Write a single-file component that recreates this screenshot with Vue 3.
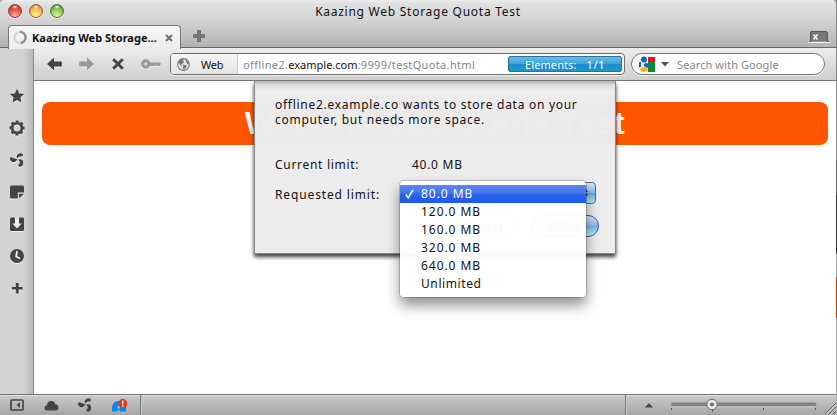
<script setup>
const sizes = ['80.0 MB', '120.0 MB', '160.0 MB', '320.0 MB', '640.0 MB', 'Unlimited']
const selected = '80.0 MB'
</script>

<template>
  <div class="desktop">
    <div class="window">
      <header class="titlebar">
        <div class="lights"><i class="red"></i><i class="yellow"></i><i class="green"></i></div>
        <div class="title">Kaazing Web Storage Quota Test</div>
        <div class="tabs">
          <div class="tab">
            <svg width="14" height="15" viewBox="0 0 14 15" fill="none" stroke-width="2.4">
              <circle cx="7" cy="7.5" r="5.6" stroke="#d3d8dc" />
              <path d="M7 1.9a5.6 5.6 0 0 1 1 11.1" stroke="#87929a" />
            </svg>
            <b>Kaazing Web Storage...</b>
            <svg class="close" width="8" height="8" viewBox="0 0 8 8" stroke="#6f6f6f" stroke-width="2"><path d="M1 1l6 6M7 1l-6 6" /></svg>
          </div>
          <svg class="newtab" width="12" height="12" viewBox="0 0 12 12"><path d="M4.5 .5h3v4h4v3h-4v4h-3v-4h-4v-3h4z" fill="#777" stroke="#555" stroke-width=".6" /></svg>
          <svg class="trash" width="22" height="12" viewBox="0 0 22 12">
            <path d="M1 10.500h1.500V2q0-1.500 1.500-1.500h14q1.500 0 1.500 1.500v8.500H21" fill="#777" stroke="#555" />
            <path d="M0 11.500h22" stroke="#eee" />
            <path d="M5.500 3.500l4 5M9.500 3.500l-4 5" stroke="#fff" stroke-width="1.400" />
          </svg>
        </div>
      </header>

      <div class="body">
        <nav class="sidebar">
          <svg viewBox="0 0 16 16"><path d="M8 .8l2.100 4.700 5 .6-3.700 3.500 1 5L8 12.100l-4.400 2.500 1-5L.9 6.100l5-.6z" /></svg>
          <svg viewBox="0 0 16 16"><circle cx="8" cy="8" r="4.900" fill="none" stroke="#444" stroke-width="2.800" /><circle cx="8" cy="8" r="6.700" fill="none" stroke="#444" stroke-width="1.800" stroke-dasharray="3 2.262" stroke-dashoffset="1.500" /></svg>
          <svg viewBox="0 0 16 16"><use href="#fan" /></svg>
          <svg viewBox="0 0 16 16"><path d="M2.500 1.500h11q1.500 0 1.500 1.500v5.500H8.800v6H2.500Q1 14.500 1 13V3q0-1.500 1.500-1.500z" /><path d="M10 9.700h5l-5 4.800z" /></svg>
          <svg viewBox="0 0 16 16"><path d="M2 1.500h12q1 0 1 1V14q0 1-1 1H2q-1 0-1-1V2.500q0-1 1-1z" /><path d="M6 1h4v6.500h2.700L8 12.500 3.300 7.500H6z" fill="#ededed" /><path d="M7 0h2v3H7z" fill="#d3d3d3" /></svg>
          <svg viewBox="0 0 16 16"><circle cx="8" cy="8" r="7" /><path d="M8 3.200l-.8 5.300 3.800 2" stroke="#eee" stroke-width="1.800" fill="none" /></svg>
          <svg viewBox="0 0 16 16"><path d="M6.800 3h2.900v3.900h3.900v2.700H9.700v3.900H6.800V9.600H2.900V6.900h3.900z" /></svg>
        </nav>

        <div class="main">
          <div class="toolbar">
            <svg class="ico back" width="15" height="14" viewBox="0 0 15 14"><path d="M0 7l7-6.500v4h7q.8 0 .8.800v3.400q0 .8-.8.800H7v4z" fill="#444" /></svg>
            <svg class="ico fwd" width="15" height="14" viewBox="0 0 15 14"><path d="M15 7L8 .5v4H1q-.8 0-.8.800v3.400q0 .8.8.800h7v4z" fill="#999" /></svg>
            <svg class="ico stop" width="12" height="12" viewBox="0 0 12 12" stroke="#444" stroke-width="3"><path d="M1.200 1.200l9.600 9.600M10.800 1.200l-9.600 9.600" /></svg>
            <svg class="ico key" width="20" height="10" viewBox="0 0 20 10"><circle cx="4.800" cy="5" r="3.100" fill="none" stroke="#999" stroke-width="3.200" /><path d="M8 3.500h11l1 1.500-1.500 2h-1.500l-1-1-1 1.500-1.200-1.500-1 1H8z" fill="#999" /></svg>
            <div class="address">
              <div class="badge">
                <svg width="13" height="13" viewBox="0 0 13 13"><circle cx="6.500" cy="6.500" r="5.900" fill="#e2e2e2" stroke="#777" stroke-width="1.100" /><path d="M1.200 4.200L4 1.200l2.800.2-.8 1.800 1.200.6-1.800 2-1.200.2.800 1.200-1 .8zM6.200 6.400l3.500 1-.8 2.500-2.400 2.200-.5-2.700zM8.500 1.200l3.200 3-.2 2.500-2-1.700z" fill="#777" /></svg>
                <span>Web</span>
              </div>
              <div class="url"><span>offline2.</span><span class="host">example.com</span><span>:9999/testQuota.html</span></div>
              <div class="progress"><span>Elements:</span><span>1/1</span></div>
            </div>
            <div class="search">
              <svg width="17" height="17" viewBox="0 0 17 17">
                <path d="M8 1h8v6H8z" fill="#f00b16" /><path d="M9 6h7v10H9z" fill="#078b35" /><path d="M0 6h5v5H0z" fill="#1263bd" /><path d="M2 0h7v16H2z" fill="#fff" />
                <ellipse cx="5" cy="3.500" rx="3" ry="3.100" fill="#1263bd" /><ellipse cx="7.200" cy="8.500" rx="2.600" ry="1.600" fill="#1263bd" /><path d="M6 8l4 2.500-2 1.500-3-2z" fill="#1263bd" /><ellipse cx="5" cy="13.500" rx="3.800" ry="2.500" fill="#fbb017" />
              </svg>
              <svg class="caret" width="8" height="5" viewBox="0 0 8 5"><path d="M0 0h8L4 4.500z" fill="#555" /></svg>
              <span>Search with Google</span>
            </div>
          </div>

          <div class="page">
            <h1>Web Storage Quota Test</h1>
            <section class="dialog">
              <p>offline2.example.co wants to store data on your<br />computer, but needs more space.</p>
              <dl>
                <dt class="cur">Current limit:</dt><dd>40.0 MB</dd>
                <dt class="req">Requested limit:</dt>
                <dd class="select"><svg width="6" height="10" viewBox="0 0 6 10"><path d="M0 4l3-4 3 4zM0 6l3 4 3-4z" fill="#222" /></svg></dd>
              </dl>
              <div class="actions"><button>Reject</button><button class="allow">Allow</button></div>
              <ul class="menu">
                <li v-for="s in sizes" :key="s" :class="{ on: s === selected }">
                  <svg class="check" width="9" height="10" viewBox="0 0 9 10"><path v-if="s === selected" d="M.8 5.500l2.400 3.300L8 .8" fill="none" stroke="#fff" stroke-width="1.600" /></svg>
                  <span>{{ s }}</span>
                </li>
              </ul>
            </section>
          </div>
        </div>
      </div>

      <footer class="status">
        <div class="panel">
          <svg width="14" height="12" viewBox="0 0 14 12"><rect x="1" y="1" width="12" height="10" rx=".8" fill="none" stroke="#444" stroke-width="1.700" /><path d="M10 3v6L6.500 6z" fill="#444" /></svg>
          <svg width="15" height="11" viewBox="0 0 15 11"><path d="M3 10.500Q.5 10.500.5 8 .5 5.500 3 5.200 3.500 1 7.300 1q3.200 0 4 3.200 3.200.3 3.200 3.300 0 3-3 3z" fill="#444" /></svg>
          <svg width="16" height="16" viewBox="0 0 16 16" fill="#444">
            <defs><g id="fan"><path d="M.8 6.800Q1 5 2.800 5.200L5 6.300q1.500 1 3.500.7Q7.500 9.800 5 10.200 1.500 10.200.8 6.800z" /><path d="M8.400 6.400Q6.800 3.800 9 2.200q2.200-1.400 4.300-.5 1.300 1.200.2 2.500l-2.400.4Q9.200 4.800 8.400 6.400z" /><path d="M9 7.800q3-1.500 4.700.8 1.300 3-.4 5.200-1.300 1.300-3 .8-1.500-.8-.8-2.200l1.300-1.200Q11.300 9.300 9 7.800z" /></g></defs>
            <use href="#fan" />
          </svg>
          <svg width="17" height="13" viewBox="0 0 17 13"><path d="M1 12.500V8Q2 2 7 2h5q3 2 3 7v3.500H9L7.500 10.500 6 12.500z" fill="#0787ee" /><path d="M6.800 7h2v2.500h-2z" fill="#b3ccdf" /><circle cx="11.700" cy="4.600" r="4.500" fill="#f02f16" /><path d="M11.700 1.600v3.800M11.700 6.300v1.400" stroke="#fff" stroke-width="1.500" /></svg>
        </div>
        <div class="blank"></div>
        <div class="zoom">
          <svg class="up" width="8" height="5" viewBox="0 0 8 5"><path d="M0 4.500h8L4 0z" fill="#444" /></svg>
          <svg class="slider" width="146" height="17" viewBox="0 0 146 17">
            <rect x=".5" y="6" width="144.500" height="3" rx="1.500" fill="#898989" stroke="#747474" stroke-width=".7" />
            <path d="M1 9.800h143" stroke="#ddd" stroke-width=".7" />
            <path d="M.5 11v2M41.500 12v3M92.500 11v2M144.500 11v2" stroke="#555" />
            <circle cx="41" cy="7.500" r="5.200" fill="#eee" stroke="#666" /><circle cx="41" cy="7.500" r="1.900" fill="#666" />
          </svg>
          <svg class="grip" width="11" height="11" viewBox="0 0 11 11"><path d="M0 11L11 0M4 11l7-7M8 11l3-3" stroke="#666" /><path d="M1 11.500l10-10M5 11.500l6-6" stroke="#eee" stroke-width=".7" /></svg>
        </div>
      </footer>
    </div>
    <div class="behind"><i class="b1"></i><i class="b2"></i><i class="b3"></i><i class="b4"></i><i class="b5"></i></div>
  </div>
</template>

<style>
body { margin: 0; overflow: hidden; background: #999; }
</style>

<style scoped>
* { box-sizing: border-box; }
svg { display: block; flex: none; }
.desktop { width: 837px; height: 415px; display: flex; background: #aaa; font: 12px/15px "Noto Sans", "Open Sans", sans-serif; color: #111; }
.window { width: 836px; display: flex; flex-direction: column; background: #fff; border-radius: 5px 5px 0 0; overflow: hidden; }
.titlebar { height: 48px; flex: none; position: relative; background: linear-gradient(#ededed 0, #e0e0e0 4px, #d6d6d6 18px, #b4b4b4 46px); border-bottom: 1px solid #686868; }
.lights { display: flex; gap: 7px; padding: 4px 0 0 8px; height: 22px; }
.lights i { width: 14px; height: 14px; border-radius: 50%; border: 1px solid #844; box-shadow: 0 1px #eee; }
.red { background: radial-gradient(ellipse 3px 2px at 50% 16%, #fff, transparent), radial-gradient(circle at 50% 85%, #ffb29a, #f1533c 50%, #a91c18); }
.lights .yellow { border-color: #a2603c; background: radial-gradient(ellipse 3px 2px at 50% 16%, #fff, transparent), radial-gradient(circle at 50% 80%, #ffff8c, #f6b04d 55%, #c25030); }
.lights .green { border-color: #4a7a34; background: radial-gradient(ellipse 3px 2px at 50% 16%, #fff, transparent), radial-gradient(circle at 50% 85%, #e3f590, #86c552 55%, #387022); }
.title { position: absolute; left: 0; right: 0; top: 4px; text-align: center; font-size: 12px; letter-spacing: .74px; }
.tabs { display: flex; align-items: flex-start; padding: 3px 6px 0 8px; }
.tab { width: 173px; height: 24px; display: flex; align-items: center; padding: 0 7px 0 4px; border: 1px solid #777; border-bottom: 0; border-radius: 4px 4px 0 0; background: linear-gradient(#f6f6f6, #ececec); position: relative; }
.tab b { margin: -1px 0 0 5px; width: 126px; font-size: 11px; white-space: nowrap; letter-spacing: 0; }
.close { margin-left: 7px; }
.newtab { margin: 5px 0 0 12px; }
.trash { margin: 6px 0 0 auto; }
.body { flex: 1; display: flex; min-height: 0; }
.sidebar { width: 34px; padding: 40px 0 0 1px; display: flex; flex-direction: column; align-items: center; gap: 16px; background: linear-gradient(90deg, #d4d4d4 0, #d3d3d3 24px, #b7b7b7 33px); border-right: 1px solid #888; }
.sidebar svg { width: 16px; height: 16px; fill: #444; filter: drop-shadow(0 1px #eee); }
.main { flex: 1; display: flex; flex-direction: column; min-width: 0; }
.toolbar { height: 33px; flex: none; display: flex; align-items: center; background: linear-gradient(#ededed, #cecece); border-bottom: 1px solid #777; padding-left: 13px; }
.ico { filter: drop-shadow(0 1px #eee); }
.fwd { margin-left: 17px; } .stop { margin-left: 18px; } .key { margin-left: 17px; }
.address { width: 455px; height: 22px; margin-left: 9px; display: flex; border: 1px solid #6d6d6d; border-radius: 4px; background: #fff; box-shadow: 0 1px #eee; }
.badge { width: 67px; display: flex; align-items: center; padding-left: 6px; border-right: 1px solid #ccc; border-radius: 3px 0 0 3px; background: linear-gradient(#f5f5f5, #e5e5e5); font-size: 11px; }
.badge span { margin-left: 11px; letter-spacing: -.2px; }
.url { flex: 1; padding: 3px 0 0 5px; font-size: 11px; color: #858585; white-space: nowrap; letter-spacing: .35px; }
.host { color: #111; letter-spacing: 0; }
.progress { width: 114px; height: 16px; margin: 2px 2px 0 0; border: 1px solid #27749f; border-radius: 2px; background: linear-gradient(#6bbce4, #3ba3d8 48%, #1b8dcd 52%, #2194d2); color: #fff; font-size: 11px; line-height: 15px; display: flex; gap: 10px; padding-left: 16px; letter-spacing: .1px; }
.progress span + span { letter-spacing: .6px; }
.search { width: 194px; height: 22px; margin-left: 6px; display: flex; align-items: center; padding-left: 7px; border: 1px solid #777; border-radius: 11px; background: #fff; box-shadow: 0 1px #eee; font-size: 11px; color: #858585; letter-spacing: .1px; white-space: nowrap; }
.caret { margin: 0 8px 0 5px; }
.page { flex: 1; position: relative; padding: 21px 8px 0; background: #fff; }
h1 { margin: 0; height: 43px; border-radius: 8px; background: #ff5500; color: #f8f6f5; text-align: center; font: bold 32px/42px "Liberation Sans", sans-serif; letter-spacing: .53px; }
.dialog { position: absolute; left: 220px; top: 0; width: 362px; height: 173px; padding: 16px 0 0 20px; border: 1px solid #888; border-top: 0; background: linear-gradient(rgba(175,175,175,.987), rgba(220,220,220,.987) 4px, rgba(236,236,236,.987) 10px); box-shadow: 0 3px 4px rgba(0,0,0,.75); clip-path: inset(0 -12px -100px -12px); letter-spacing: .72px; }
p { margin: 0; white-space: nowrap; }
dl { margin: 30px 0 0; display: grid; grid-template-columns: 125px 196px; grid-template-rows: 15px 20px; row-gap: 11px; }
dt { white-space: nowrap; letter-spacing: .7px; } dd { margin: 0 0 0 12px; white-space: nowrap; }
.req { padding-top: 4px; letter-spacing: .87px; }
.select { margin: -1px 0 0; width: 196px; height: 22px; border: 1px solid #536a8f; border-radius: 4px; background: linear-gradient(#d4e6f8, #84b9e7 50%, #65a8df 52%, #c2eaff); display: flex; justify-content: flex-end; align-items: center; padding-right: 7px; }
.actions { display: flex; gap: 12px; margin: 12px 0 0 176px; }
button { width: 68px; height: 22px; padding: 0; border: 1px solid #999; border-radius: 11px; background: #fafafa; font: 12px "Noto Sans", sans-serif; letter-spacing: .6px; }
.allow { border-color: #465b9c; background: linear-gradient(#dbeafb, #91bdec 48%, #78b5e9 52%, #c7f4ff); }
.menu { position: absolute; left: 145px; top: 100px; width: 186px; height: 116px; margin: 0; padding: 4px 0 0; list-style: none; border-radius: 4px; background: rgba(255,255,255,.97); box-shadow: 0 0 0 1px rgba(0,0,0,.18), 0 8px 14px rgba(0,0,0,.45); }
.menu li { height: 18px; display: flex; align-items: center; padding-left: 5px; gap: 7px; line-height: 18px; letter-spacing: .95px; }
.menu li:last-child { letter-spacing: .6px; }
.menu .on { color: #fff; background: linear-gradient(#5d88f3, #3f71ee 50%, #2c62ee 52%, #1d58f0); }
.status { height: 21px; flex: none; display: flex; background: linear-gradient(#cbcbcb, #a5a5a5); border-top: 1px solid #777; box-shadow: inset 0 1px #ddd; }
.panel { width: 141px; display: flex; align-items: center; padding-left: 10px; border-right: 1px solid #777; }
.panel svg + svg { margin-left: 20px; }
.panel svg:nth-child(3) { margin-left: 18px; }
.panel svg:nth-child(4) { margin-left: 18px; }
.blank { flex: 1; border-right: 1px solid #777; box-shadow: inset 1px 0 #ccc; }
.zoom { width: 210px; display: flex; align-items: center; padding-left: 19px; box-shadow: inset 1px 0 #ccc; }
.slider { margin: 0 0 0 18px; }
.grip { margin: 7px 0 0 8px; }
.behind { width: 1px; display: flex; flex-direction: column; background: #aaa; }
.behind i { flex: none; width: 1px; }
.b1 { height: 160px; background: #888; } .b2 { height: 35px; background: #666; } .b3 { height: 59px; background: #333; } .b4 { height: 23px; background: #aaa; } .b5 { height: 41px; background: #b83a00; }
</style>
